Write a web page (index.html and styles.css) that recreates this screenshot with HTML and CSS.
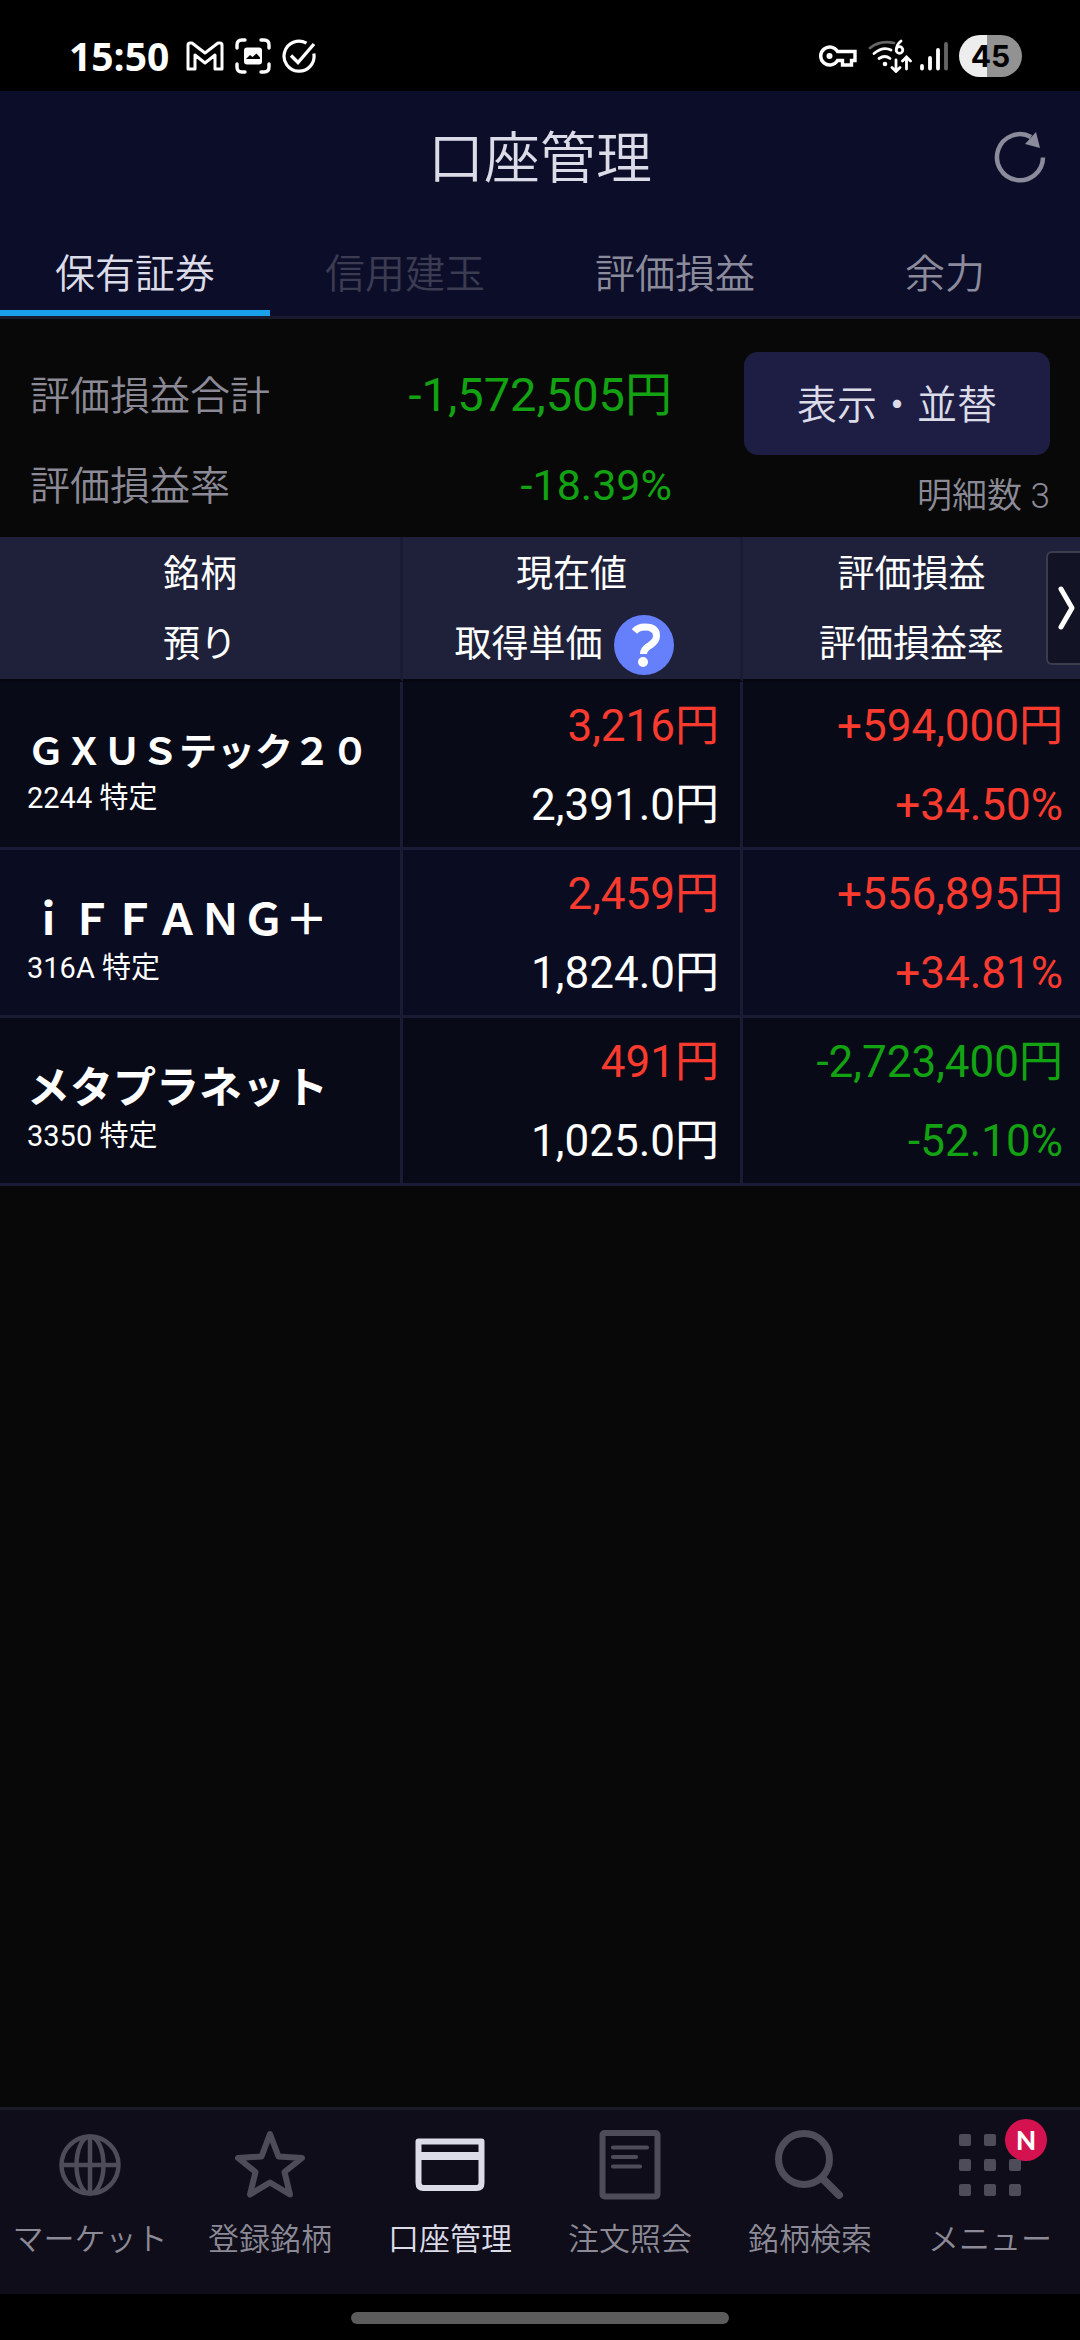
FILE: index.html
```html
<!DOCTYPE html>
<html lang="ja">
<head>
<meta charset="utf-8">
<meta name="viewport" content="width=device-width, initial-scale=1">
<title>口座管理</title>
<link rel="stylesheet" href="styles.css">
</head>
<body>
<div class="status-bar">
  <div class="status-group">
    <span class="clock">15:50</span>
    <svg class="status-icon mail-icon" width="38" height="30" viewBox="0 0 38 30" fill="none" stroke="#fff" stroke-width="3" stroke-linejoin="round"><path d="M2 28V4q0-2 2-2h2l13 10L32 2h2q2 0 2 2v24h-7V14l-10 8-10-8v14z"/></svg>
    <svg class="status-icon capture-icon" width="36" height="36" viewBox="0 0 36 36" fill="none" stroke="#fff" stroke-width="3.4" stroke-linecap="round"><path d="M2 10V7q0-5 5-5h3M26 2h3q5 0 5 5v3M34 26v3q0 5-5 5h-3M10 34H7q-5 0-5-5v-3"/><path fill="#fff" stroke="none" d="M12 9.500h12q3 0 3 3v11q0 3-3 3H12q-3 0-3-3v-11q0-3 3-3z"/><path fill="#000" stroke="none" d="M11 21l4-4 2.500 2 4-3.500 3.500 4V21z"/></svg>
    <svg class="status-icon" width="34" height="34" viewBox="0 0 34 34" fill="none" stroke="#fff" stroke-width="3.200"><path d="M24.500 4.200A15 15 0 1 0 31.800 14.500"/><path d="M9 16.500l7 7L32 5" stroke-width="3.400"/></svg>
  </div>
  <div class="status-group">
    <svg class="status-icon" width="38" height="22" viewBox="0 0 38 22" fill="none" stroke="#fff" stroke-width="3.400"><path d="M18.500 6.500H36v9h-3.500V20h-9v-4.500h-5A9 9 0 1 1 18.500 6.500z"/><circle cx="10.500" cy="11" r="3" fill="#fff" stroke="none"/></svg>
    <svg class="status-icon wifi-icon" width="44" height="34" viewBox="0 0 44 34" fill="none" stroke="#fff" stroke-width="2.800" stroke-linecap="round"><path d="M2 9Q12 1 26 4" stroke="#666"/><path d="M6 14.500Q15 7 23 11M11 19.500q6-4 11 0"/><circle cx="17" cy="25" r="2.300" fill="#fff" stroke="none"/><circle cx="31.500" cy="11" r="3.300"/><path d="M28.500 9.500Q29 5 33 2M28 21v11M24 28.500l4 4 4-4M38.500 30V18M34.500 22l4-4 4 4"/></svg>
    <svg class="status-icon signal-icon" width="28" height="30" viewBox="0 0 28 30" stroke="#fff" stroke-width="3.800" stroke-linecap="round"><path d="M2 25v2.500M10 17v10.500M18 9v18.500"/><path d="M26 3v24.500" stroke="#666"/></svg>
    <span class="battery">45</span>
  </div>
</div>

<header class="app-header">
  <div class="title-row">
    <h1 class="page-title">口座管理</h1>
    <button class="refresh" type="button" aria-label="更新">
      <svg width="54" height="54" viewBox="0 0 54 54"><path d="M50 27.500A23 23 0 1 1 38 7" fill="none" stroke="#8b8b9c" stroke-width="4.500"/><path d="M43 2l4 16-15-4z" fill="#8b8b9c"/></svg>
    </button>
  </div>
  <nav class="tabs">
    <a class="tab tab-active" href="#holdings">保有証券</a>
    <a class="tab tab-disabled" href="#margin">信用建玉</a>
    <a class="tab" href="#profit">評価損益</a>
    <a class="tab" href="#power">余力</a>
  </nav>
</header>

<main class="content">
  <section class="summary">
    <dl class="totals">
      <dt>評価損益合計</dt><dd class="total-amount down">-1,572,505円</dd>
      <dt>評価損益率</dt><dd class="total-rate down">-18.39%</dd>
    </dl>
    <div class="tools">
      <button class="sort-button" type="button">表示・並替</button>
      <span class="count">明細数 3</span>
    </div>
  </section>

  <div class="holdings">
    <table class="holdings-table">
      <thead>
        <tr>
          <th class="col-name"><span>銘柄</span><span>預り</span></th>
          <th class="col-price"><span>現在値</span><span class="with-help">取得単価<button class="help" type="button" aria-label="ヘルプ"><svg width="60" height="60" viewBox="0 0 60 60"><circle cx="30" cy="30" r="30" fill="#6680fc"/><path d="M20.500 16.500Q24 12 31 12q11.500 0 11.500 9 0 5-6 9-7 4-7 9" fill="none" stroke="#fff" stroke-width="7"/><circle cx="29" cy="47" r="5" fill="#fff"/></svg></button></span></th>
          <th class="col-profit"><span>評価損益</span><span>評価損益率</span></th>
        </tr>
      </thead>
      <tbody>
        <tr>
          <td class="stock"><span class="stock-name stock-name-long">ＧＸＵＳテック２０</span><span class="stock-code">2244 特定</span></td>
          <td class="figures price"><span class="up">3,216円</span><span>2,391.0円</span></td>
          <td class="figures"><span class="up">+594,000円</span><span class="up">+34.50%</span></td>
        </tr>
        <tr>
          <td class="stock"><span class="stock-name">ｉＦＦＡＮＧ＋</span><span class="stock-code">316A 特定</span></td>
          <td class="figures price"><span class="up">2,459円</span><span>1,824.0円</span></td>
          <td class="figures"><span class="up">+556,895円</span><span class="up">+34.81%</span></td>
        </tr>
        <tr>
          <td class="stock"><span class="stock-name">メタプラネット</span><span class="stock-code">3350 特定</span></td>
          <td class="figures price"><span class="up">491円</span><span>1,025.0円</span></td>
          <td class="figures"><span class="down">-2,723,400円</span><span class="down">-52.10%</span></td>
        </tr>
      </tbody>
    </table>
    <button class="scroll-next" type="button" aria-label="次の列">
      <svg width="20" height="46" viewBox="0 0 20 46" fill="none" stroke="#fff" stroke-width="5" stroke-linecap="round" stroke-linejoin="round"><path d="M4 4l11 19L4 42"/></svg>
    </button>
  </div>
</main>

<nav class="bottom-nav">
  <a class="nav-item" href="#market">
    <svg width="70" height="70" viewBox="0 0 70 70" fill="none" stroke="#4d4c58" stroke-width="4.500"><circle cx="35" cy="35" r="28.500"/><ellipse cx="35" cy="35" rx="13.500" ry="28.500"/><path d="M35 6.500v57M6.500 35h57"/></svg>
    <span>マーケット</span>
  </a>
  <a class="nav-item" href="#watchlist">
    <svg width="70" height="70" viewBox="0 0 70 70" fill="none" stroke="#4d4c58" stroke-width="6" stroke-linejoin="round"><path d="M35 4l8.500 22.500L67 28 49.500 42 55 64.500 35 52.500 15 64.500 20.500 42 3 28l23.500-1.500z"/></svg>
    <span>登録銘柄</span>
  </a>
  <a class="nav-item nav-current" href="#account">
    <svg width="70" height="70" viewBox="0 0 70 70" fill="none" stroke="#dcdbe8"><path d="M3.500 11.500h63V53q0 5-5 5h-53q-5 0-5-5z" stroke-width="6" stroke-linejoin="round"/><path d="M3 26h64" stroke-width="8"/></svg>
    <span>口座管理</span>
  </a>
  <a class="nav-item" href="#orders">
    <svg width="70" height="70" viewBox="0 0 70 70" fill="none" stroke="#4d4c58" stroke-linecap="round"><rect x="7.500" y="3" width="55" height="63.500" rx="2" stroke-width="6"/><path d="M18 17.500h34M18 27h23M18 36.500h27" stroke-width="4.200"/></svg>
    <span>注文照会</span>
  </a>
  <a class="nav-item" href="#search">
    <svg width="70" height="70" viewBox="0 0 70 70" fill="none" stroke="#4d4c58"><circle cx="29" cy="29" r="25.500" stroke-width="7"/><path d="M47 48l17 17" stroke-width="8" stroke-linecap="round"/></svg>
    <span>銘柄検索</span>
  </a>
  <a class="nav-item" href="#menu">
    <svg width="70" height="70" viewBox="0 0 70 70" fill="#4d4c58"><rect x="4" y="4" width="12" height="12" rx="2"/><rect x="29" y="4" width="12" height="12" rx="2"/><rect x="54" y="4" width="12" height="12" rx="2"/><rect x="4" y="29" width="12" height="12" rx="2"/><rect x="29" y="29" width="12" height="12" rx="2"/><rect x="54" y="29" width="12" height="12" rx="2"/><rect x="4" y="54" width="12" height="12" rx="2"/><rect x="29" y="54" width="12" height="12" rx="2"/><rect x="54" y="54" width="12" height="12" rx="2"/></svg>
    <span>メニュー</span>
    <b class="badge">N</b>
  </a>
</nav>
<div class="gesture-area"><div class="gesture-bar"></div></div>
</body>
</html>
```
FILE: styles.css
```css
* {
  box-sizing: border-box;
}

body {
  margin: 0;
  min-height: 100vh;
  display: flex;
  flex-direction: column;
  background: #080808;
  color: #fff;
  font-family: Roboto, "Noto Sans CJK JP", sans-serif;
  font-size: 40px;
}

button {
  margin: 0;
  padding: 0;
  border: 0;
  background: none;
  color: inherit;
  font: inherit;
}

a {
  color: inherit;
  text-decoration: none;
}

svg {
  display: block;
}

/* Status bar */
.status-bar {
  display: flex;
  justify-content: space-between;
  align-items: center;
  height: 91px;
  padding: 20px 58px 0 69px;
  background: #000;
}

.status-group {
  display: flex;
  align-items: center;
  gap: 11px;
}

.clock {
  margin-right: 6px;
  font-family: "Open Sans", sans-serif;
  font-size: 39px;
  font-weight: 700;
  line-height: 48px;
}

.wifi-icon {
  margin-right: -3px;
}

.battery {
  width: 63px;
  height: 42px;
  border-radius: 21px;
  background: linear-gradient(90deg, #ededed 28px, #929292 28px);
  color: #000;
  font-family: Inter, sans-serif;
  font-size: 30px;
  font-weight: 700;
  line-height: 42px;
  text-align: center;
}

/* Header */
.app-header {
  background: #0c0d28;
  border-bottom: 3px solid #191a2e;
}

.title-row {
  display: grid;
  grid-template-columns: 1fr auto 1fr;
  align-items: center;
  height: 132px;
  padding: 0 33px;
}

.page-title {
  grid-column: 2;
  margin: 0;
  padding-top: 4px;
  color: #dcdbe8;
  font-size: 56px;
  font-weight: 350;
  line-height: 80px;
}

.refresh {
  justify-self: end;
}

.tabs {
  display: grid;
  grid-template-columns: repeat(4, 1fr);
}

.tab {
  height: 93px;
  border-bottom: 6px solid transparent;
  color: #8b8b9c;
  font-weight: 350;
  line-height: 103px;
  text-align: center;
}

.tab-active {
  border-color: #1aa0e8;
  color: #dcdbe8;
}

.tab-disabled {
  color: #3b3b52;
}

/* Summary */
.content {
  flex: 1;
}

.summary {
  display: flex;
  gap: 72px;
  padding: 31px 30px 4px;
}

.totals {
  flex: 1;
  display: grid;
  grid-template-columns: auto 1fr;
  grid-template-rows: 90px 90px;
  margin: 0;
  line-height: 90px;
}

.totals dt {
  padding-top: 2px;
  color: #8b8a96;
  font-weight: 350;
}

.totals dd {
  margin: 0;
  text-align: right;
}

.total-amount {
  font-size: 47px;
}

.total-rate {
  font-size: 43px;
}

.up {
  color: #f93b2f;
}

.down {
  color: #12a212;
}

.tools {
  display: flex;
  flex-direction: column;
  width: 306px;
  padding-top: 2px;
}

.sort-button {
  height: 103px;
  padding-bottom: 4px;
  border-radius: 14px;
  background: #1e1e45;
  color: #dcdbe8;
  font-weight: 350;
}

.count {
  padding-top: 6px;
  color: #8b8a96;
  font-size: 35px;
  font-weight: 350;
  line-height: 72px;
  text-align: right;
}

/* Holdings */
.holdings {
  position: relative;
}

.holdings-table {
  width: 100%;
  table-layout: fixed;
  border-collapse: separate;
  border-spacing: 0;
}

.holdings-table span {
  display: block;
}

.holdings-table th,
.holdings-table td {
  padding: 0;
  border-right: 3px solid #1a1c36;
  border-bottom: 3px solid #1a1c36;
}

.holdings-table th:last-child,
.holdings-table td:last-child {
  border-right: 0;
}

.holdings-table th {
  height: 145px;
  padding-top: 4px;
  border-bottom-color: #05060f;
  background: #1e2139;
  font-size: 37px;
  font-weight: 400;
  line-height: 68px;
}

.holdings-table th span + span {
  margin-top: 2px;
}

.col-name {
  width: 37.3%;
}

.col-price {
  width: 31.5%;
}

.holdings-table .with-help {
  display: flex;
  justify-content: center;
  align-items: center;
  gap: 12px;
  padding-right: 14px;
}

.holdings-table td {
  height: 168px;
  background: #080a18;
}

.holdings-table tr:nth-child(even) td {
  background: #0a0c22;
}

.holdings-table .stock {
  padding: 14px 0 0 27px;
}

.stock-name {
  font-size: 43px;
  font-weight: 700;
  line-height: 56px;
}

.stock-name-long {
  font-size: 38px;
  line-height: 52px;
}

.stock-code {
  font-size: 29px;
  line-height: 40px;
}

.holdings-table .figures {
  padding: 5px 17px 2px 0;
  font-size: 44px;
  line-height: 79px;
  text-align: right;
}

.holdings-table .price {
  padding-right: 21px;
}

.scroll-next {
  position: absolute;
  top: 14px;
  right: 0;
  width: 34px;
  height: 114px;
  padding-left: 9px;
  border: 2px solid #3b3c4c;
  border-right: 0;
  border-radius: 6px 0 0 6px;
  background: #121324;
}

/* Bottom navigation */
.bottom-nav {
  display: grid;
  grid-template-columns: repeat(6, 1fr);
  height: 187px;
  border-top: 3px solid #191a24;
  background: #0f0d19;
}

.nav-item {
  position: relative;
  display: flex;
  flex-direction: column;
  align-items: center;
  padding-top: 20px;
  color: #8b8a96;
  font-size: 31px;
  font-weight: 350;
  line-height: 44px;
  white-space: nowrap;
}

.nav-item span {
  margin-top: 18px;
}

.nav-current {
  color: #dcdbe8;
}

.badge {
  position: absolute;
  top: 9px;
  right: 33px;
  width: 42px;
  height: 42px;
  border-radius: 50%;
  background: #d51250;
  color: #fff;
  font-family: Lato, sans-serif;
  font-size: 26px;
  font-weight: 900;
  line-height: 42px;
  text-align: center;
}

.gesture-area {
  display: flex;
  justify-content: center;
  align-items: center;
  height: 46px;
  padding-top: 2px;
  background: #000;
}

.gesture-bar {
  width: 35%;
  height: 12px;
  border-radius: 6px;
  background: #5c5c5c;
}
```
